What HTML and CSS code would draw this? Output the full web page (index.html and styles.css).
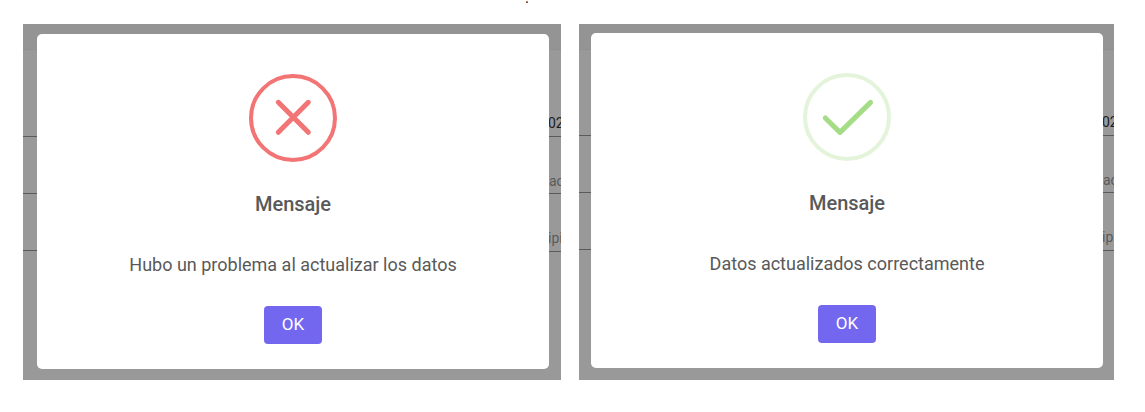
FILE: index.html
```html
<!DOCTYPE html>
<html lang="es">
<head>
<meta charset="utf-8">
<meta name="viewport" content="width=device-width, initial-scale=1">
<title>Mensaje</title>
<link rel="stylesheet" href="styles.css">
</head>
<body>
<p class="intro">.</p>
<main class="panels">
  <section class="panel panel-error">
    <div class="fields">
      <div class="field"></div>
      <div class="field"></div>
      <div class="field"></div>
    </div>
    <div class="modal" role="dialog" aria-labelledby="error-title">
      <svg class="icon icon-error" viewBox="0 0 88 88" aria-hidden="true">
        <circle cx="44" cy="44" r="42"/>
        <path d="M29.3 28.3 59.3 58.3M59.3 28.3 29.3 58.3"/>
      </svg>
      <h2 class="title" id="error-title">Mensaje</h2>
      <p class="message">Hubo un problema al actualizar los datos</p>
      <button class="confirm" type="button">OK</button>
    </div>
    <div class="fields fields-end">
      <div class="field field-value">02</div>
      <div class="field field-hint">ac</div>
      <div class="field field-last">ipi</div>
    </div>
  </section>
  <section class="panel panel-success">
    <div class="fields">
      <div class="field"></div>
      <div class="field"></div>
      <div class="field"></div>
    </div>
    <div class="modal" role="dialog" aria-labelledby="success-title">
      <svg class="icon icon-success" viewBox="0 0 88 88" aria-hidden="true">
        <circle cx="44" cy="44" r="42"/>
        <path d="M22.3 45 37 59.4 67.6 29.4"/>
      </svg>
      <h2 class="title" id="success-title">Mensaje</h2>
      <p class="message">Datos actualizados correctamente</p>
      <button class="confirm" type="button">OK</button>
    </div>
    <div class="fields fields-end">
      <div class="field field-value">02</div>
      <div class="field field-hint">ac</div>
      <div class="field field-last">ip</div>
    </div>
  </section>
</main>
</body>
</html>
```
FILE: styles.css
```css
* {
  box-sizing: border-box;
}

body {
  margin: 0;
  background: #fff;
  color: #595959;
  font-family: Roboto, "Liberation Sans", sans-serif;
}

.intro {
  height: 24px;
  margin: 0;
  padding-right: 91px;
  color: #000;
  font-size: 10px;
  font-weight: 700;
  line-height: 0;
  text-align: center;
}

.panels {
  display: grid;
  grid-template-columns: 538fr 535fr;
  gap: 18px;
  padding: 0 31px 32px 23px;
}

.panel {
  display: grid;
  background: linear-gradient(#949494 25px, #909090 25px 26px, #999 26px);
}

.panel-error {
  grid-template-columns: 14px 1fr 12px;
  padding: 10px 0 11px;
}

.panel-success {
  grid-template-columns: 12px 1fr 11px;
  padding: 9px 0 12px;
}

.modal {
  display: flex;
  flex-direction: column;
  align-items: center;
  padding: 40px 16px 25px;
  border-radius: 5px;
  background: #fff;
  text-align: center;
}

.icon {
  width: 88px;
  height: 88px;
  fill: none;
  stroke-linecap: round;
  stroke-linejoin: round;
}

.icon circle {
  stroke-width: 4;
}

.icon path {
  stroke-width: 5;
}

.icon-error {
  stroke: #f27474;
}

.icon-success {
  stroke: #a5dc86;
}

.icon-success circle {
  stroke: #e4f4db;
}

.title {
  margin: 30px 0 0;
  font-size: 20px;
  font-weight: 500;
  line-height: 24px;
}

.message {
  margin: 37px 0 29px;
  font-size: 18px;
  line-height: 24px;
}

.confirm {
  width: 58px;
  height: 38px;
  padding: 0 0 2px;
  border: 0;
  border-radius: 4px;
  background: #7367f0;
  color: #fff;
  font: 400 17px/24px Roboto, "Liberation Sans", sans-serif;
  cursor: pointer;
}

.fields {
  min-width: 0;
  padding-top: 46px;
  overflow: hidden;
}

.fields-end {
  text-indent: -1px;
}

.field {
  height: 57px;
  padding-top: 34px;
  border-bottom: 1px solid #5a5a5a;
  font-size: 14px;
  line-height: 20px;
  white-space: nowrap;
}

.field-value {
  color: #1c1c1c;
}

.field-hint {
  padding-left: 1px;
}

.field-value {
  padding-top: 33px;
}

.field-last {
  height: 58px;
}
```
